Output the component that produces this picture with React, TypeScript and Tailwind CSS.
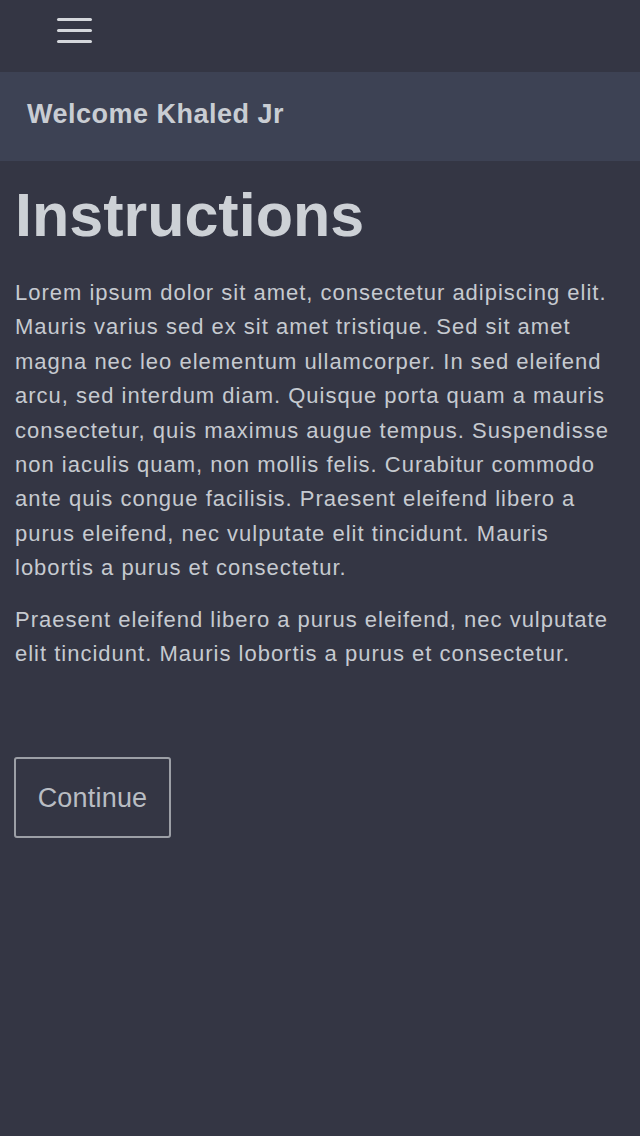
export default function App() {
  return (
    <div
      className="min-h-[1136px] w-full bg-[#343644] text-[#caced4]"
      style={{ fontFamily: '"Liberation Sans", Arial, sans-serif' }}
    >
      {/* Top bar */}
      <div className="h-[72px] flex items-start pt-[18px] pl-[57px]">
        <button className="flex flex-col gap-[8px] w-[35px]">
          <span className="block h-[3px] w-full bg-[#d4d7dc] rounded-sm" />
          <span className="block h-[3px] w-full bg-[#d4d7dc] rounded-sm" />
          <span className="block h-[3px] w-full bg-[#d4d7dc] rounded-sm" />
        </button>
      </div>

      {/* Welcome bar */}
      <div className="h-[89px] bg-[#3d4254] flex items-center px-[27px] pb-[4px]">
        <h2 className="text-[27px] font-bold text-[#c9cdd3] tracking-[0.5px]">
          Welcome Khaled Jr
        </h2>
      </div>

      {/* Content */}
      <div className="px-[15px]">
        <h1 className="text-[61px] font-bold leading-none mt-[24px] text-[#cdd1d6]">
          Instructions
        </h1>
        <p className="text-[22px] leading-[34.4px] tracking-[1px] mt-[30px] text-[#c6cad0]">
          Lorem ipsum dolor sit amet, consectetur adipiscing elit. Mauris
          varius sed ex sit amet tristique. Sed sit amet magna nec leo
          elementum ullamcorper. In sed eleifend arcu, sed interdum diam.
          Quisque porta quam a mauris consectetur, quis maximus augue tempus.
          Suspendisse non iaculis quam, non mollis felis. Curabitur commodo ante
          quis congue facilisis. Praesent eleifend libero a purus eleifend, nec
          vulputate elit tincidunt. Mauris lobortis a purus et consectetur.
        </p>
        <p className="text-[22px] leading-[34.4px] tracking-[1px] mt-[17px] text-[#c6cad0]">
          Praesent eleifend libero a purus eleifend, nec vulputate elit
          tincidunt. Mauris lobortis a purus et consectetur.
        </p>

        <button className="mt-[86px] w-[157px] h-[81px] -ml-[1px] border-2 border-[#9c9fa6] rounded-[3px] text-[27px] text-[#b9bdc3] tracking-[0.2px]">
          Continue
        </button>
      </div>
    </div>
  );
}
